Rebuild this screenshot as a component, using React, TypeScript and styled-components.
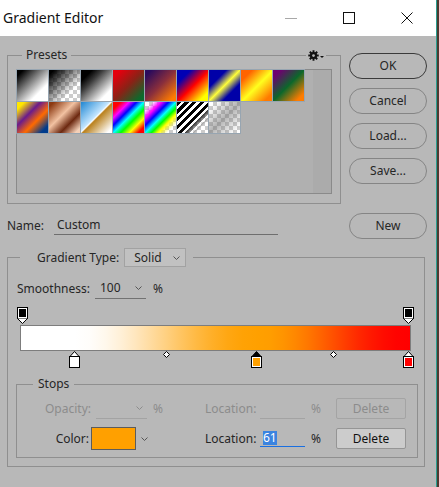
import React from 'react'
import styled, { createGlobalStyle, css } from 'styled-components'

const GlobalStyle = createGlobalStyle`
  html, body {
    margin: 0;
    padding: 0;
    background: #4b3a30;
  }
  body {
    font-family: 'Noto Sans', 'Segoe UI', 'DejaVu Sans', sans-serif;
    font-size: 12px;
    line-height: 16px;
    color: #262626;
  }
  * {
    box-sizing: border-box;
  }
`

const checker = 'repeating-conic-gradient(#cccccc 0 25%, #ffffff 0 50%) 0 0 / 8px 8px'

const Screen = styled.div`
  width: 439px;
  height: 487px;
  display: flex;
  overflow: hidden;
`

const Window = styled.div`
  width: 437px;
  height: 487px;
  background: #b8b8b8;
  border-right: 1px solid #2a9d8f;
  display: flex;
  flex-direction: column;
`

const TitleBar = styled.div`
  height: 36px;
  flex: none;
  background: #ffffff;
  display: flex;
  align-items: center;
`

const Title = styled.div`
  flex: 1;
  padding-left: 3px;
  font-size: 14px;
  color: #111;
`

const WinButton = styled.div`
  width: 58px;
  height: 36px;
  display: flex;
  align-items: center;
  justify-content: center;
`

const Content = styled.div`
  padding: 11px 9px 0 7px;
  display: flex;
  flex-direction: column;
`

const TopRow = styled.div`
  display: flex;
  gap: 8px;
`

const Fieldset = styled.fieldset`
  margin: 0;
  min-width: 0;
  border: 1px solid #8f8f8f;
  position: relative;
`

const PresetsBox = styled(Fieldset)`
  width: 334px;
  padding: 6px 8px 9px 8px;
`

const Legend = styled.legend<{ $ml: number; $pl: number; $pr: number }>`
  margin-left: ${p => p.$ml}px;
  padding: 0 ${p => p.$pr}px 0 ${p => p.$pl}px;
  line-height: 16px;
  display: flex;
  align-items: center;
`

const GearMenu = styled.div`
  position: absolute;
  top: -14px;
  right: 14px;
  width: 20px;
  height: 12px;
  background: #b8b8b8;
  display: flex;
  align-items: center;
  justify-content: center;
  gap: 1px;
`

const Panel = styled.div`
  height: 125px;
  border: 1px solid #8a8a8a;
  background: #b0b0b0;
  display: flex;
`

const SwatchGrid = styled.div`
  flex: 1;
  display: grid;
  grid-template-columns: repeat(9, 31px);
  grid-auto-rows: 31px;
  gap: 1px;
  align-content: start;
`

const ScrollTrack = styled.div`
  width: 18px;
  background: #ababab;
`

const Swatch = styled.div<{ $checker?: boolean }>`
  width: 31px;
  height: 31px;
  outline: 1px solid #97a5b1;
  background: ${p => (p.$checker ? checker : 'none')};
`

const SwatchFill = styled.div<{ $fill: string; $mask?: string }>`
  width: 100%;
  height: 100%;
  background: ${p => p.$fill};
  ${p =>
    p.$mask &&
    css`
      -webkit-mask-image: ${p.$mask};
      mask-image: ${p.$mask};
    `}
`

const ButtonColumn = styled.div`
  width: 78px;
  padding-top: 6px;
  display: flex;
  flex-direction: column;
  gap: 9px;
`

const PillButton = styled.button<{ $primary?: boolean }>`
  width: 78px;
  height: 26px;
  border-radius: 13px;
  border: 1px solid ${p => (p.$primary ? '#3a3a3a' : '#858585')};
  background: transparent;
  font: inherit;
  color: #262626;
  padding: 0;
`

const NameRow = styled.div`
  margin-top: 9px;
  height: 26px;
  display: flex;
  align-items: center;
`

const NameLabel = styled.div`
  width: 47px;
`

const NameInput = styled.div`
  width: 224px;
  height: 18px;
  padding-left: 3px;
  border-bottom: 1px solid #6e6e6e;
`

const Spacer = styled.div`
  flex: 1;
`

const GradientBox = styled(Fieldset)`
  margin-top: 9px;
  width: 418px;
  padding: 11px 9px 8px 9px;
`

const Select = styled.div`
  margin-left: 5px;
  width: 62px;
  height: 19px;
  border: 1px solid #a2a2a2;
  background: #c1c1c1;
  display: flex;
  align-items: center;
  justify-content: space-between;
  padding: 0 5px 0 9px;
`

const Row = styled.div`
  display: flex;
  align-items: center;
`

const Dropdown = styled.div<{ $w: number; $ml: number; $muted?: boolean }>`
  width: ${p => p.$w}px;
  height: 21px;
  margin-left: ${p => p.$ml}px;
  border-bottom: 1px solid ${p => (p.$muted ? '#a3a3a3' : '#727272')};
  display: flex;
  align-items: center;
  justify-content: space-between;
  padding: 0 4px 0 5px;
`

const Pct = styled.div<{ $ml: number; $muted?: boolean }>`
  margin-left: ${p => p.$ml}px;
  color: ${p => (p.$muted ? '#8c8c8c' : '#262626')};
`

const BarArea = styled.div`
  margin-top: 8px;
  width: 397px;
  display: flex;
  flex-direction: column;
`

const StopTrack = styled.div<{ $h: number }>`
  position: relative;
  height: ${p => p.$h}px;
`

const StopMark = styled.svg`
  position: absolute;
  top: 0;
  display: block;
`

const Bar = styled.div`
  margin-left: 3px;
  width: 391px;
  height: 26px;
  border: 1px solid #7d7d7d;
`

const StopsBox = styled(Fieldset)`
  margin: 8px 0 0 -1px;
  width: 402px;
  padding: 6px 0 7px 0;
  display: flex;
  flex-direction: column;
  gap: 8px;
`

const StopRow = styled.div<{ $h: number }>`
  height: ${p => p.$h}px;
  display: flex;
  align-items: center;
`

const FieldLabel = styled.div<{ $w: number; $right?: boolean; $muted?: boolean; $pr?: number }>`
  width: ${p => p.$w}px;
  flex: none;
  text-align: ${p => (p.$right ? 'right' : 'left')};
  padding-right: ${p => p.$pr ?? 0}px;
  color: ${p => (p.$muted ? '#8c8c8c' : '#262626')};
`

const Slot = styled.div<{ $w: number; $pl?: number }>`
  width: ${p => p.$w}px;
  flex: none;
  display: flex;
  align-items: center;
  padding-left: ${p => p.$pl ?? 0}px;
`

const UnderField = styled.div<{ $w: number; $h: number; $ml?: number; $color: string }>`
  width: ${p => p.$w}px;
  height: ${p => p.$h}px;
  margin-left: ${p => p.$ml ?? 0}px;
  border-bottom: 1px solid ${p => p.$color};
  display: flex;
  align-items: center;
  justify-content: space-between;
  padding: 0 4px 0 3px;
`

const Selected = styled.span`
  background: #3b84e0;
  color: #fff;
  line-height: 14px;
`

const ColorWell = styled.div`
  width: 45px;
  height: 23px;
  border: 1px solid #5c5c5c;
  background: #ffa000;
`

const RectButton = styled.button<{ $disabled?: boolean }>`
  width: 70px;
  height: 21px;
  padding: 0;
  font: inherit;
  border-radius: 2px;
  border: 1px solid ${p => (p.$disabled ? '#a4a4a4' : '#959595')};
  background: ${p => (p.$disabled ? 'transparent' : '#cccccc')};
  color: ${p => (p.$disabled ? '#8c8c8c' : '#111')};
`

const Chevron = ({ color = '#555' }: { color?: string }) => (
  <svg width="7" height="4" viewBox="0 0 7 4">
    <polyline points="0.5,0.5 3.5,3.5 6.5,0.5" fill="none" stroke={color} strokeWidth="1" />
  </svg>
)

const Gear = () => {
  const teeth = Array.from({ length: 8 }, (_, i) => i * 45)
  return (
    <svg width="11" height="11" viewBox="0 0 16 16">
      {teeth.map(a => (
        <rect key={a} x="6.6" y="0.4" width="2.8" height="4" fill="#111" transform={`rotate(${a} 8 8)`} />
      ))}
      <circle cx="8" cy="8" r="5.2" fill="#111" />
      <circle cx="8" cy="8" r="2" fill="#b8b8b8" />
    </svg>
  )
}

const presets: { fill: string; checker?: boolean; mask?: string }[] = [
  { fill: 'linear-gradient(135deg, #000 10%, #fff 72%)' },
  { fill: 'linear-gradient(135deg, #000 8%, rgba(0,0,0,0) 70%)', checker: true },
  { fill: 'linear-gradient(135deg, #000 18%, #3a3a3a 35%, #fff 80%)' },
  { fill: 'linear-gradient(135deg, #e5000e 12%, #8a2216 50%, #0d6a2c 88%)' },
  { fill: 'linear-gradient(135deg, #2b0b5c 10%, #8a2f3c 50%, #ff7c00 90%)' },
  { fill: 'linear-gradient(135deg, #0000b4 22%, #ff0000 52%, #ffff00 86%)' },
  { fill: 'linear-gradient(135deg, #0000a8 28%, #ffff3a 50%, #0000a8 72%)' },
  { fill: 'linear-gradient(135deg, #ff6400 18%, #ffff1e 52%, #ff7a00 88%)' },
  { fill: 'linear-gradient(135deg, #6e0070 12%, #0c672b 50%, #ff7c00 88%)' },
  { fill: 'linear-gradient(135deg, #ffe600 12%, #6a1b8c 38%, #ff6a00 62%, #003b8c 88%)' },
  { fill: 'linear-gradient(135deg, #8c3a12 8%, #f2c2a2 42%, #6c2810 68%, #f4d0b8 92%)' },
  { fill: 'linear-gradient(135deg, #1f86d2 0%, #c4e6ff 46%, #ffffff 49%, #b9801c 52%, #ffffff 92%)' },
  { fill: 'linear-gradient(135deg, #ff0000 12%, #ff00ff 26%, #0000ff 38%, #00ffff 50%, #00ff00 62%, #ffff00 76%, #ff0000 90%)' },
  {
    fill: 'linear-gradient(135deg, rgba(255,0,0,0) 12%, #ff00ff 26%, #0000ff 38%, #00ffff 50%, #00ff00 60%, #ffff00 70%, rgba(255,0,0,0) 86%)',
    checker: true,
  },
  {
    fill: 'repeating-linear-gradient(135deg, #000 0 3px, #fff 3px 5.5px)',
    checker: true,
    mask: 'linear-gradient(135deg, #000 55%, rgba(0,0,0,0) 80%)',
  },
  { fill: 'linear-gradient(135deg, rgba(120,120,120,0) 10%, rgba(120,120,120,0.55) 50%, rgba(120,120,120,0) 92%)', checker: true },
]

type Rgb = [number, number, number]
const colorStops: { at: number; rgb: Rgb }[] = [
  { at: 0.136, rgb: [255, 255, 255] },
  { at: 0.61, rgb: [255, 160, 0] },
  { at: 1, rgb: [255, 0, 0] },
]
const midpoints = [0.372, 0.805]

// stop location p sits at x = 22.5 + p*386 on screen, bar inner starts at 21 and is 389 wide
const toBarPct = (p: number) => ((1.5 + p * 386) / 389) * 100

const barGradient = (() => {
  const parts: string[] = [`rgb(255,255,255) 0%`]
  for (let i = 0; i < colorStops.length - 1; i++) {
    const a = colorStops[i]
    const b = colorStops[i + 1]
    for (let k = 0; k <= 12; k++) {
      const t = k / 12
      const s = t * t * (3 - 2 * t)
      const c = a.rgb.map((v, j) => Math.round(v + (b.rgb[j] - v) * s))
      const p = a.at + (b.at - a.at) * t
      parts.push(`rgb(${c.join(',')}) ${toBarPct(p).toFixed(2)}%`)
    }
  }
  return `linear-gradient(90deg, ${parts.join(', ')})`
})()

const TopStop = ({ at }: { at: number }) => (
  <StopMark width="11" height="17" viewBox="0 0 11 17" style={{ left: at * 386 }}>
    <rect x="0.5" y="0.5" width="10" height="11" fill="#fff" stroke="#000" />
    <rect x="2" y="2" width="7" height="8" fill="#000" />
    <path d="M0.5 11.5 L5.5 16.5 L10.5 11.5" fill="#fff" stroke="#000" />
  </StopMark>
)

const BottomStop = ({ at, color, active }: { at: number; color: string; active?: boolean }) => (
  <StopMark width="11" height="17" viewBox="0 0 11 17" style={{ left: at * 386 }}>
    <path d="M0.5 6 L5.5 0.5 L10.5 6 Z" fill={active ? '#000' : '#fff'} stroke="#000" />
    <rect x="0.5" y="5.5" width="10" height="11" fill="#fff" stroke="#000" />
    <rect x="2" y="7" width="7" height="8" fill={color} />
  </StopMark>
)

const Midpoint = ({ at }: { at: number }) => (
  <StopMark width="7" height="7" viewBox="0 0 7 7" style={{ left: at * 386 + 2 }}>
    <path d="M3.5 0.5 L6.5 3.5 L3.5 6.5 L0.5 3.5 Z" fill="#fff" stroke="#000" />
  </StopMark>
)

export default function App() {
  return (
    <Screen>
      <GlobalStyle />
      <Window>
        <TitleBar>
          <Title>Gradient Editor</Title>
          <WinButton>
            <svg width="12" height="1">
              <rect width="12" height="1" fill="#a8a8a8" />
            </svg>
          </WinButton>
          <WinButton>
            <svg width="12" height="12">
              <rect x="0.5" y="0.5" width="11" height="11" fill="none" stroke="#111" />
            </svg>
          </WinButton>
          <WinButton>
            <svg width="12" height="12">
              <path d="M0.5 0.5 L11.5 11.5 M11.5 0.5 L0.5 11.5" stroke="#111" strokeWidth="1" />
            </svg>
          </WinButton>
        </TitleBar>

        <Content>
          <TopRow>
            <PresetsBox>
              <Legend $ml={6} $pl={4} $pr={4}>Presets</Legend>
              <GearMenu>
                <Gear />
                <svg width="4" height="4" style={{ marginTop: 5 }}>
                  <path d="M0 0 L4 0 L2 2 Z" fill="#111" />
                </svg>
              </GearMenu>
              <Panel>
                <SwatchGrid>
                  {presets.map((p, i) => (
                    <Swatch key={i} $checker={p.checker}>
                      <SwatchFill $fill={p.fill} $mask={p.mask} />
                    </Swatch>
                  ))}
                </SwatchGrid>
                <ScrollTrack />
              </Panel>
            </PresetsBox>
            <ButtonColumn>
              <PillButton $primary>OK</PillButton>
              <PillButton>Cancel</PillButton>
              <PillButton>Load...</PillButton>
              <PillButton>Save...</PillButton>
            </ButtonColumn>
          </TopRow>

          <NameRow>
            <NameLabel>Name:</NameLabel>
            <NameInput>Custom</NameInput>
            <Spacer />
            <PillButton>New</PillButton>
          </NameRow>

          <GradientBox>
            <Legend $ml={3} $pl={17} $pr={7}>
              Gradient Type:
              <Select>
                Solid
                <Chevron />
              </Select>
            </Legend>

            <Row>
              <span>Smoothness:</span>
              <Dropdown $w={51} $ml={5}>
                100
                <Chevron />
              </Dropdown>
              <Pct $ml={7}>%</Pct>
            </Row>

            <BarArea>
              <StopTrack $h={18}>
                <TopStop at={0} />
                <TopStop at={1} />
              </StopTrack>
              <Bar style={{ background: barGradient }} />
              <StopTrack $h={17}>
                <BottomStop at={0.136} color="#fff" />
                <Midpoint at={midpoints[0]} />
                <BottomStop at={0.606} color="#ffa000" active />
                <Midpoint at={midpoints[1]} />
                <BottomStop at={1} color="#ff0000" />
              </StopTrack>
            </BarArea>

            <StopsBox>
              <Legend $ml={16} $pl={5} $pr={5}>Stops</Legend>
              <StopRow $h={21}>
                <FieldLabel $w={74} $right $muted>Opacity:</FieldLabel>
                <Slot $w={60}>
                  <UnderField $w={51} $h={20} $ml={5} $color="#a3a3a3">
                    <span />
                    <Chevron color="#8c8c8c" />
                  </UnderField>
                </Slot>
                <Slot $w={54} $pl={2}>
                  <Pct $ml={0} $muted>%</Pct>
                </Slot>
                <FieldLabel $w={55} $muted>Location:</FieldLabel>
                <UnderField $w={45} $h={20} $color="#a3a3a3" />
                <Slot $w={31} $pl={6}>
                  <Pct $ml={0} $muted>%</Pct>
                </Slot>
                <RectButton $disabled>Delete</RectButton>
              </StopRow>
              <StopRow $h={23}>
                <FieldLabel $w={74} $right $pr={2}>Color:</FieldLabel>
                <Slot $w={60}>
                  <ColorWell />
                  <span style={{ width: 5 }} />
                  <Chevron />
                </Slot>
                <Slot $w={54} $pl={2} />
                <FieldLabel $w={55}>Location:</FieldLabel>
                <UnderField $w={45} $h={17} $color="#1a6fe0">
                  <Selected>61</Selected>
                </UnderField>
                <Slot $w={31} $pl={6}>
                  <Pct $ml={0}>%</Pct>
                </Slot>
                <RectButton>Delete</RectButton>
              </StopRow>
            </StopsBox>
          </GradientBox>
        </Content>
      </Window>
    </Screen>
  )
}
